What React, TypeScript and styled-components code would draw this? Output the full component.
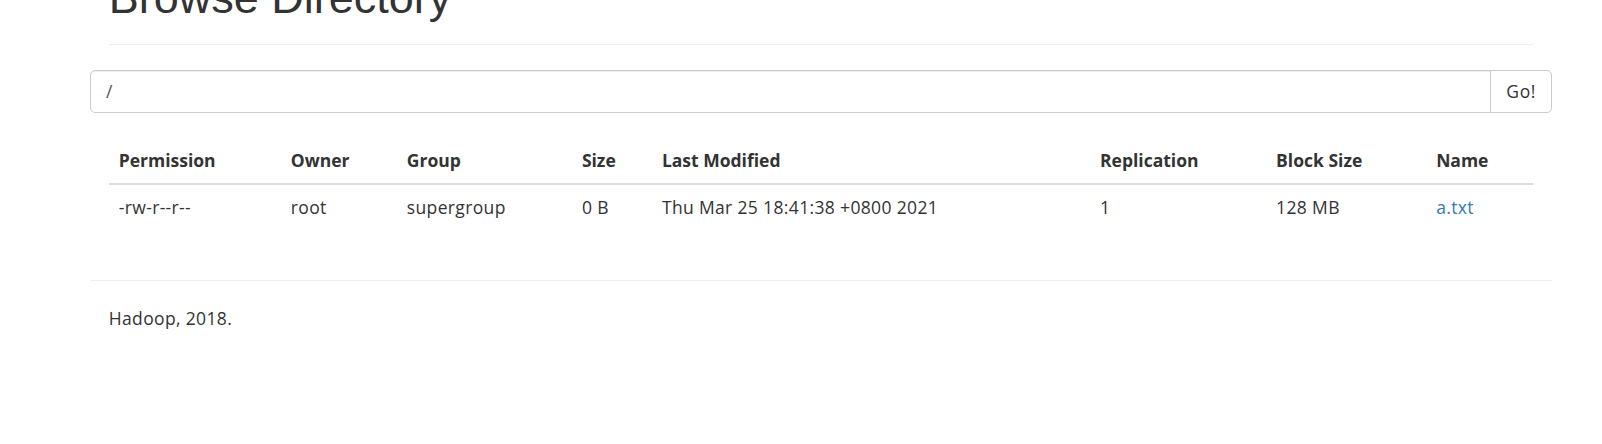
import React from "react";
import styled, { createGlobalStyle } from "styled-components";

const Global = createGlobalStyle`
  html, body { margin: 0; padding: 0; background: #fff; }
  body {
    font-family: "Open Sans", "Noto Sans", sans-serif;
    font-size: 17.5px;
    line-height: 25px;
    color: #333;
    overflow: hidden;
  }
  * { box-sizing: border-box; }
`;

const Container = styled.div`
  width: 1462px;
  margin-left: 90px;
  padding: 0 18.75px;
`;

const PageHeader = styled.div`
  padding-bottom: 9px;
  margin: 0 0 25px;
  border-bottom: 1px solid #eee;
`;

const Title = styled.h1`
  margin: -27px 0 12.5px;
  font-family: "Liberation Sans", Arial, sans-serif;
  font-weight: 400;
  font-size: 45px;
  line-height: 49.5px;
  color: #333;
`;

const Row = styled.div`
  display: flow-root;
  margin: 0 -18.75px;
`;

const InputGroup = styled.form`
  display: flex;
  width: 100%;
  margin: 0;
`;

const PathInput = styled.input`
  flex: 1;
  height: 42.5px;
  padding: 7.5px 15px;
  font: inherit;
  letter-spacing: 0.35px;
  color: #555;
  border: 1px solid #ccc;
  border-radius: 5px 0 0 5px;
  box-shadow: inset 0 1px 1px rgba(0, 0, 0, 0.075);
  outline: none;
`;

const GoButton = styled.button`
  height: 42.5px;
  margin-left: -1px;
  padding: 7.5px 15px;
  font: inherit;
  letter-spacing: 0.6px;
  color: #333;
  background: #fff;
  border: 1px solid #ccc;
  border-radius: 0 5px 5px 0;
`;

const Spacer = styled.div`
  height: 25px;
`;

const Table = styled.table`
  width: 100%;
  table-layout: fixed;
  border-collapse: collapse;
  border-spacing: 0;
  margin-bottom: 25px;
`;

const Th = styled.th`
  text-align: left;
  font-weight: 700;
  padding: 10px;
  line-height: 25px;
  border-bottom: 2.5px solid #ddd;
  vertical-align: bottom;
`;

const Td = styled.td`
  padding: 10px;
  line-height: 25px;
  letter-spacing: 0.35px;
  vertical-align: top;
`;

const Link = styled.a`
  color: #337ab7;
  text-decoration: none;
`;

const Rule = styled.hr`
  margin: 25px 0;
  border: 0;
  border-top: 1px solid #eee;
`;

const FooterCol = styled.div`
  padding: 0 18.75px;
`;

const FooterText = styled.p`
  margin: 0 0 12.5px;
  letter-spacing: 0.35px;
`;

const columns = [
  { label: "Permission", width: 172 },
  { label: "Owner", width: 116 },
  { label: "Group", width: 175 },
  { label: "Size", width: 80 },
  { label: "Last Modified", width: 438 },
  { label: "Replication", width: 176 },
  { label: "Block Size", width: 160 },
  { label: "Name", width: 107 },
];

export default function App() {
  return (
    <>
      <Global />
      <Container>
        <PageHeader>
          <Title>Browse Directory</Title>
        </PageHeader>
        <Row>
          <InputGroup onSubmit={(e) => e.preventDefault()}>
            <PathInput type="text" defaultValue="/" />
            <GoButton type="submit">Go!</GoButton>
          </InputGroup>
        </Row>
        <Spacer />
        <Table>
          <colgroup>
            {columns.map((c) => (
              <col key={c.label} style={{ width: c.width }} />
            ))}
          </colgroup>
          <thead>
            <tr>
              {columns.map((c) => (
                <Th key={c.label}>{c.label}</Th>
              ))}
            </tr>
          </thead>
          <tbody>
            <tr>
              <Td>-rw-r--r--</Td>
              <Td>root</Td>
              <Td>supergroup</Td>
              <Td>0 B</Td>
              <Td>Thu Mar 25 18:41:38 +0800 2021</Td>
              <Td>1</Td>
              <Td>128 MB</Td>
              <Td>
                <Link href="#">a.txt</Link>
              </Td>
            </tr>
          </tbody>
        </Table>
        <Row>
          <Rule />
          <FooterCol>
            <FooterText>Hadoop, 2018.</FooterText>
          </FooterCol>
        </Row>
      </Container>
    </>
  );
}
